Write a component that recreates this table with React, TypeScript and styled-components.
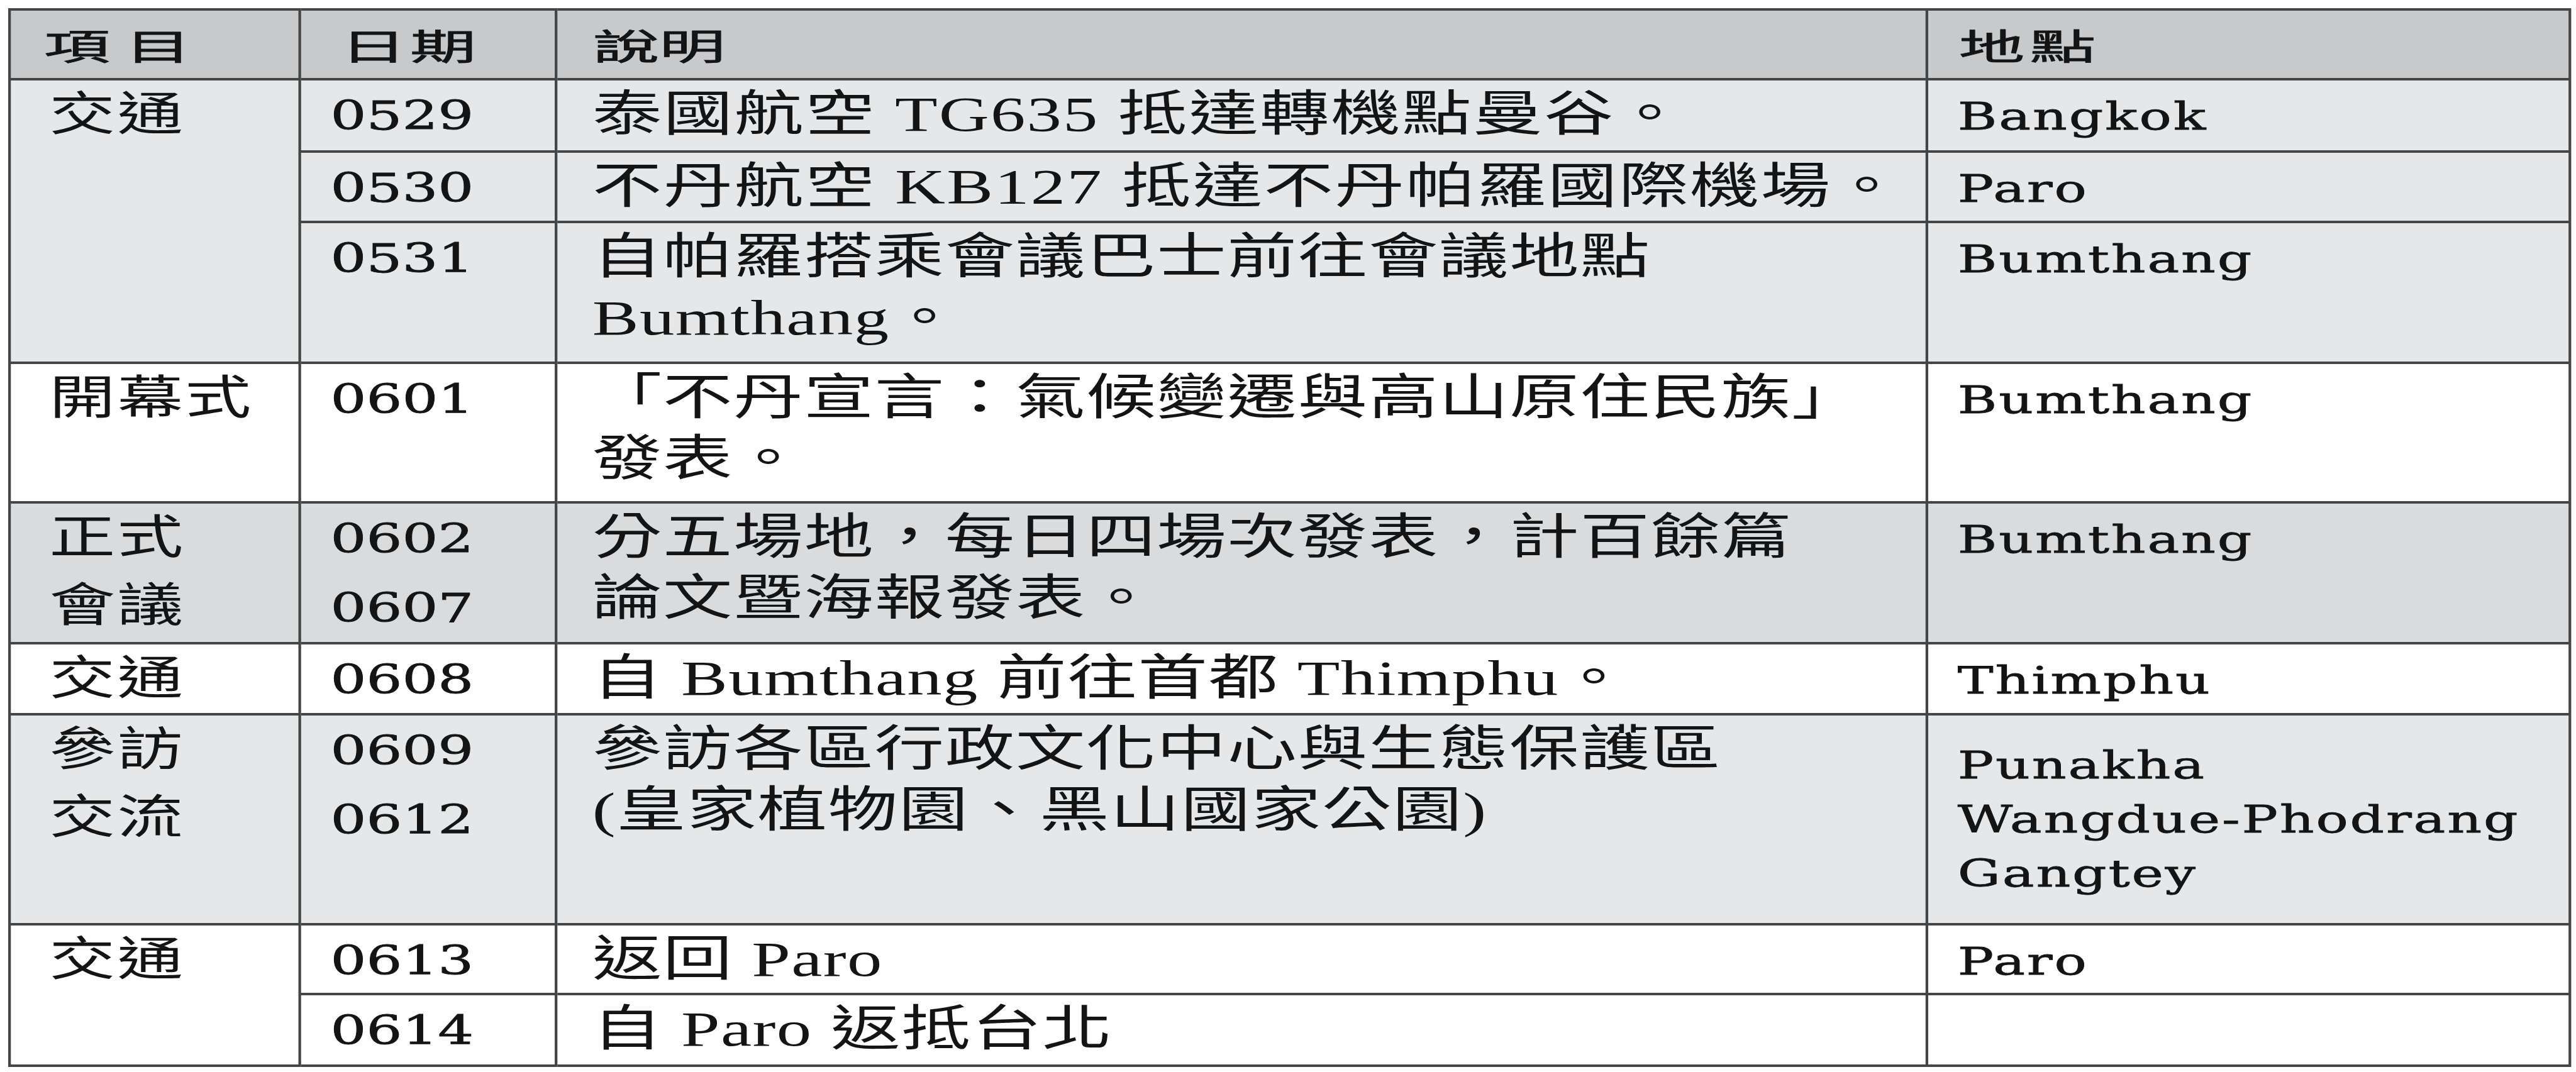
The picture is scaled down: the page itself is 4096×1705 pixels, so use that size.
import React from "react";
import styled, { createGlobalStyle } from "styled-components";

type Tone = "head" | "light" | "mid" | "white";

const tones: Record<Tone, string> = {
  head: "#c8c9cb",
  light: "#e6e7e8",
  mid: "#dadbdd",
  white: "#ffffff",
};

interface Row {
  h: number;
  tone: Tone;
  item?: { lines: string[]; span?: number };
  date: string[];
  desc: string[];
  place: string[];
  loose?: boolean;
  middle?: boolean;
}

const rows: Row[] = [
  {
    h: 115,
    tone: "light",
    item: { lines: ["交通"], span: 3 },
    date: ["0529"],
    desc: ["泰國航空 TG635 抵達轉機點曼谷。"],
    place: ["Bangkok"],
    loose: true,
  },
  {
    h: 112,
    tone: "light",
    date: ["0530"],
    desc: ["不丹航空 KB127 抵達不丹帕羅國際機場。"],
    place: ["Paro"],
    loose: true,
  },
  {
    h: 224,
    tone: "light",
    date: ["0531"],
    desc: ["自帕羅搭乘會議巴士前往會議地點", "Bumthang。"],
    place: ["Bumthang"],
  },
  {
    h: 222,
    tone: "white",
    item: { lines: ["開幕式"] },
    date: ["0601"],
    desc: ["「不丹宣言：氣候變遷與高山原住民族」", "發表。"],
    place: ["Bumthang"],
  },
  {
    h: 224,
    tone: "mid",
    item: { lines: ["正式", "會議"] },
    date: ["0602", "0607"],
    desc: ["分五場地，每日四場次發表，計百餘篇", "論文暨海報發表。"],
    place: ["Bumthang"],
  },
  {
    h: 113,
    tone: "white",
    item: { lines: ["交通"] },
    date: ["0608"],
    desc: ["自 Bumthang 前往首都 Thimphu。"],
    place: ["Thimphu"],
  },
  {
    h: 334,
    tone: "light",
    item: { lines: ["參訪", "交流"] },
    date: ["0609", "0612"],
    desc: ["參訪各區行政文化中心與生態保護區", "(皇家植物園、黑山國家公園)"],
    place: ["Punakha", "Wangdue-Phodrang", "Gangtey"],
    middle: true,
  },
  {
    h: 111,
    tone: "white",
    item: { lines: ["交通"], span: 2 },
    date: ["0613"],
    desc: ["返回 Paro"],
    place: ["Paro"],
  },
  {
    h: 114,
    tone: "white",
    date: ["0614"],
    desc: ["自 Paro 返抵台北"],
    place: [],
  },
];

const headers = [
  { text: "項目", spread: 13, pad: 37 },
  { text: "日期", spread: 3, pad: 44 },
  { text: "說明", spread: 0, pad: 40 },
  { text: "地點", spread: 4, pad: 34 },
];

const GlobalStyle = createGlobalStyle`
  body {
    margin: 0;
    background: #ffffff;
  }
`;

const Page = styled.div`
  padding: 13px 0 0 13px;
`;

// the printed table is stretched sideways, so it is laid out at its natural
// width and widened as a whole
const Sheet = styled.div`
  width: 2867px;
  transform: scaleX(1.42);
  transform-origin: 0 0;
`;

const Table = styled.table`
  width: 100%;
  border-collapse: collapse;
  table-layout: fixed;
  font-family: "Liberation Serif", "Noto Sans CJK TC", serif;
  color: #141414;
  text-spacing-trim: space-all;
`;

const TableRow = styled.tr<{ $tone: Tone; $h: number }>`
  height: ${(p) => p.$h}px;
  background: ${(p) => tones[p.$tone]};
`;

const HeadCell = styled.th<{ $pad: number }>`
  padding: 12px 0 0 ${(p) => p.$pad}px;
  border-style: solid;
  border-color: #454545;
  border-width: 4px 3px;
  text-align: left;
  vertical-align: middle;
  font-size: 57px;
  font-weight: 400;
  line-height: 1.2;
  -webkit-text-stroke: 0.8px #141414;
`;

// the heading glyphs are set wider than the body text
const HeadLabel = styled.span<{ $spread: number }>`
  display: inline-block;
  letter-spacing: ${(p) => p.$spread}px;
  transform: scaleX(1.3);
  transform-origin: 0 50%;
`;

const Cell = styled.td`
  padding: 0;
  border-style: solid;
  border-color: #454545;
  border-width: 4px 3px;
  vertical-align: top;
`;

const ItemCell = styled(Cell)`
  padding-left: 43px;
  font-size: 74px;
  line-height: 108px;
  letter-spacing: 2px;
`;

const DateCell = styled(Cell)`
  padding: 7px 0 0 33px;
  font-family: "DejaVu Serif", serif;
  font-size: 63px;
  line-height: 100px;
  -webkit-text-stroke: 0.8px #141414;
`;

const DescCell = styled(Cell)<{ $loose?: boolean }>`
  padding: 5px 0 0 39px;
  font-size: 78px;
  line-height: 97px;
  letter-spacing: ${(p) => (p.$loose ? 1.5 : 1)}px;
`;

const PlaceCell = styled(Cell)<{ $middle?: boolean }>`
  padding: ${(p) => (p.$middle ? 0 : 14)}px 0 0 33px;
  vertical-align: ${(p) => (p.$middle ? "middle" : "top")};
  font-family: "DejaVu Serif", serif;
  font-size: 60px;
  line-height: 86px;
  letter-spacing: 2px;
  -webkit-text-stroke: 0.8px #141414;
`;

const Stack = styled.div<{ $gap?: number }>`
  display: flex;
  flex-direction: column;
  gap: ${(p) => p.$gap ?? 0}px;
`;

const Line = styled.span`
  white-space: nowrap;
`;

const Lines = ({ items, gap }: { items: string[]; gap?: number }) => (
  <Stack $gap={gap}>
    {items.map((text, i) => (
      <Line key={i}>{text}</Line>
    ))}
  </Stack>
);

const App = () => {
  return (
    <Page>
      <GlobalStyle />
      <Sheet>
        <Table>
          <colgroup>
            <col style={{ width: 325 }} />
            <col style={{ width: 287 }} />
            <col style={{ width: 1535 }} />
            <col style={{ width: 720 }} />
          </colgroup>
          <thead>
            <TableRow $tone="head" $h={111}>
              {headers.map((head) => (
                <HeadCell key={head.text} $pad={head.pad}>
                  <HeadLabel $spread={head.spread}>{head.text}</HeadLabel>
                </HeadCell>
              ))}
            </TableRow>
          </thead>
          <tbody>
            {rows.map((row, i) => (
              <TableRow key={i} $tone={row.tone} $h={row.h}>
                {row.item && (
                  <ItemCell rowSpan={row.item.span ?? 1}>
                    <Lines items={row.item.lines} />
                  </ItemCell>
                )}
                <DateCell>
                  <Lines items={row.date} gap={10} />
                </DateCell>
                <DescCell $loose={row.loose}>
                  <Lines items={row.desc} />
                </DescCell>
                <PlaceCell $middle={row.middle}>
                  <Lines items={row.place} />
                </PlaceCell>
              </TableRow>
            ))}
          </tbody>
        </Table>
      </Sheet>
    </Page>
  );
};

export default App;
